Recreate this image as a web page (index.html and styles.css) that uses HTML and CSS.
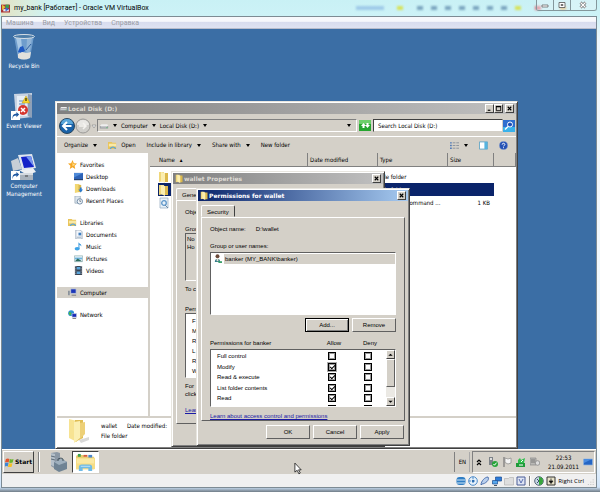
FILE: index.html
```html
<!DOCTYPE html>
<html lang="en">
<head>
  <meta charset="UTF-8">
  <meta name="viewport" content="width=device-width, initial-scale=1.0">
  <title>my_bank [Работает] - Oracle VM VirtualBox</title>
  <link rel="stylesheet" href="styles.css">
</head>
<body>
  <!-- shared icons -->
  <svg class="sprite" aria-hidden="true">
    <symbol id="folder" viewBox="0 0 12 12">
      <path d="M1 1h5v9l-5 1z" fill="#f0d77a"/>
      <path d="M6 2h4v9H5z" fill="#dcb94c"/>
      <path d="M3 1l4 1v10L3 10z" fill="#fbeeb0"/>
    </symbol>
    <symbol id="library" viewBox="0 0 10 10">
      <path d="M0 1h4l1 1h4v7H0z" fill="#e9c45a"/>
      <path d="M1 3h8v3H1z" fill="#f9e9a6"/>
      <path d="M2 9c0-4 7-4 7 0H7.500c0-2-4-2-4 0z" fill="#5aa5da"/>
    </symbol>
    <symbol id="drive" viewBox="0 0 12 10">
      <path d="M1 5l2-2h7l1 2z" fill="#eee"/>
      <path d="M1 5h10v3H1z" fill="#999da3"/>
      <path d="M2 6h8" stroke="#e8e8e8"/>
      <path d="M9 7h1" stroke="#3c4"/>
    </symbol>
    <symbol id="shortcut" viewBox="0 0 10 10">
      <path d="M0 0h10v10H0z" fill="#fff"/>
      <path d="M2 9c0-3 1-4 4-4V7l3-3-3-3v2C3 3 1 5 2 9z" fill="#1c56a0"/>
    </symbol>
    <symbol id="cross" viewBox="0 0 8 8">
      <path d="M2 2l4 4M6 2L2 6" stroke="#000" stroke-width="1.300"/>
    </symbol>
  </svg>

  <div class="machine">
    <header class="machine-title">
      <svg class="ic-8" viewBox="0 0 8 8"><path d="M0 1h8v7H0z" fill="#a33"/><path d="M1 1l3 2-3 3z" fill="#e8c93a"/><path d="M4 1h3v3H4z" fill="#3e9e4c"/><path d="M2 5h5v2H2z" fill="#e9eef8"/><path d="M4 3l3 2-3 2z" fill="#3b6ac9"/></svg>
      <h1>my_bank [Работает] - Oracle VM VirtualBox</h1>
      <div class="glass-blur" aria-hidden="true"><i class="blue"></i><i class="yellow"></i><i></i><i></i><i></i><i></i><i></i><i></i><i></i><i class="yellow"></i><i class="red"></i><i class="orange"></i></div>
      <div class="glass-buttons">
        <button aria-label="Minimize"><svg viewBox="0 0 10 8"><path d="M2 4h6v2H2z" fill="#fff" stroke="#555" stroke-width=".7"/></svg></button>
        <button aria-label="Maximize"><svg viewBox="0 0 10 8"><path d="M2 1.500h6v5H2z" fill="#fff" stroke="#555" stroke-width=".8"/><path d="M4 3.500h2v1H4z" fill="#999" stroke="#555" stroke-width=".7"/></svg></button>
        <button class="wide" aria-label="Close"><svg viewBox="0 0 10 8"><path d="M2.500 1.500l5 5M7.500 1.500l-5 5" stroke="#555" stroke-width="2.600"/><path d="M2.500 1.500l5 5M7.500 1.500l-5 5" stroke="#fff" stroke-width="1.400"/></svg></button>
      </div>
    </header>

    <div class="machine-body">
      <nav class="menu">
        <span>Машина</span><span>Вид</span><span>Устройства</span><span>Справка</span>
      </nav>

      <main class="desktop">
        <div class="shortcuts">
          <div class="shortcut">
            <svg viewBox="0 0 28 28"><path d="M4 3l4 22q6 3 12 0l4-22z" fill="#6f9dcc"/><path d="M6 5l4 19h3L11 5z" fill="#a9c9e6"/><path d="M17 5l-1 19h3l3-19z" fill="#8fb3d6"/><ellipse cx="14" cy="3.500" rx="10.500" ry="2" fill="#4d7da9" stroke="#d5dde5"/><path d="M10 14l3-1 2 5-4 2-3-1z" fill="#1f59c2"/><path d="M16 17l5-6" stroke="#2f5f9f"/><path d="M8 21l4-2 5 1 4-1-1 6q-6 3-12 0z" fill="#e2e0dc"/></svg>
            <span>Recycle Bin</span>
          </div>
          <div class="shortcut">
            <svg viewBox="0 0 28 28"><path d="M4 1l18-1v24l-16 2z" fill="#c8d3e2"/><path d="M7 3h10v20H7z" fill="#e6edf6"/><path d="M18 1l4 1v23l-4-2z" fill="#8ea0b8"/><path d="M9 8h6M9 11h6" stroke="#5d8bc4"/><path d="M16 3l4 7h-8z" fill="#f7d52c" stroke="#b99712" stroke-width=".5"/><path d="M16 5v3" stroke="#000"/><circle cx="13" cy="17" r="5" fill="#d5362f"/><path d="M11 15l4 4M15 15l-4 4" stroke="#fff" stroke-width="1.500"/><use href="#shortcut" x="1" y="18" width="9" height="9"/></svg>
            <span>Event Viewer</span>
          </div>
          <div class="shortcut">
            <svg viewBox="0 0 28 28"><path d="M8 2l14-1 4 14-14 2z" fill="#dfe6ee"/><path d="M11 4l10-1 3 11-10 1z" fill="#1322c8"/><path d="M16 3.500l5-.5 3 11z" fill="#7596ef"/><path d="M1 8l7-3 4 11-9 2z" fill="#c7ced6"/><path d="M9 17l14-2 3 4-9 3z" fill="#edf0f3"/><path d="M10 20h13v7H10z" fill="#a9b3bd"/><path d="M10 20h13v2H10z" fill="#d5dbe1"/><path d="M15 23h3" stroke="#444"/><use href="#shortcut" x="1" y="18" width="9" height="9"/></svg>
            <span>Computer Management</span>
          </div>
        </div>

        <!-- explorer window -->
        <section class="window explorer">
          <div class="titlebar inactive">
            <svg class="ic-9"><use href="#drive"/></svg>
            <h2>Local Disk (D:)</h2>
            <button class="cap" aria-label="Minimize"><svg viewBox="0 0 8 8"><path d="M2 6h3" stroke="#000" stroke-width="1.300"/></svg></button>
            <button class="cap" aria-label="Maximize"><svg viewBox="0 0 8 8"><path d="M1.500 2h5v4.500h-5z" fill="none" stroke="#000"/><path d="M1 1.700h6" stroke="#000" stroke-width="1.300"/></svg></button>
            <button class="cap gap" aria-label="Close"><svg><use href="#cross"/></svg></button>
          </div>

          <div class="navbar">
            <svg class="arrows" viewBox="0 0 38 18"><circle cx="8" cy="9" r="7.500" fill="#1a62a8" stroke="#29475f"/><path d="M2 7a6 5 0 0 1 12 0z" fill="#5aa7db"/><path d="M12.500 9H4.500M8 5L4 9l4 4" stroke="#fff" stroke-width="2" fill="none"/><circle cx="24" cy="9" r="7" fill="#d0cfcb" stroke="#9b9a97"/><path d="M18 8a6 5 0 0 1 12 0z" fill="#e9e8e5"/><path d="M20 9h7M24 6l3 3-3 3" stroke="#f4f3f0" stroke-width="1.500" fill="none"/><path d="M33 8h4l-2 3z" fill="#eee" stroke="#888" stroke-width=".6"/></svg>
            <div class="address">
              <svg class="ic-10"><use href="#drive"/></svg>
              <i class="caret"></i><span>Computer</span>
              <i class="caret"></i><span>Local Disk (D:)</span>
              <i class="caret"></i>
              <i class="caret end"></i>
            </div>
            <button class="refresh" aria-label="Refresh"><svg viewBox="0 0 12 11"><path d="M0 0h12v11H0z" fill="#25a52f"/><path d="M0 0h12v4H0z" fill="#6ccf6a"/><path d="M2 6l2.500-3L7 6H5.500v2h-2V6zM6 5l2.500 3L11 5H9.500V3h-2v2z" fill="#fff"/></svg></button>
            <input class="search" type="text" aria-label="Search Local Disk (D:)" value="Search Local Disk (D:)">
            <button class="find" aria-label="Search"><svg viewBox="0 0 12 12"><path d="M0 0h12v12H0z" fill="#2f6fd0"/><path d="M0 7h12v5H0z" fill="#39b1ea"/><circle cx="7" cy="4.500" r="2.500" fill="#1d4fb8" stroke="#fff"/><path d="M5 6.500L2 9.500" stroke="#fff" stroke-width="1.500"/></svg></button>
          </div>

          <div class="toolbar">
            <button>Organize <i class="caret"></i></button>
            <button><svg class="ic-9"><use href="#library"/></svg> Open</button>
            <button>Include in library <i class="caret"></i></button>
            <button>Share with <i class="caret"></i></button>
            <button>New folder</button>
            <button class="right" aria-label="Change your view"><svg class="ic-9" viewBox="0 0 10 10"><path d="M0 2h2M0 5h2M0 8h2" stroke="#557eb8" stroke-width="1.500"/><path d="M3 2h3M7 2h3M3 5h3M7 5h3M3 8h3M7 8h3" stroke="#88909a"/></svg> <i class="caret"></i></button>
            <button aria-label="Preview pane"><svg class="ic-9" viewBox="0 0 10 10"><path d="M.5 1h9v8h-9z" fill="#fff" stroke="#5ca3c4"/><path d="M6 1h3v8H6z" fill="#55b3df"/></svg></button>
            <button aria-label="Help"><svg class="ic-9" viewBox="0 0 10 10"><circle cx="5" cy="5" r="4.500" fill="#2450b5" stroke="#7d97cf" stroke-width=".6"/><path d="M3.500 4c0-2 3-2 3 0 0 1-1.500 1-1.500 2M5 7v1" stroke="#fff" stroke-width="1.100" fill="none"/></svg></button>
          </div>

          <div class="panes">
            <nav class="tree">
              <ul>
                <li class="root"><svg viewBox="0 0 10 10"><path d="M5 0l1.500 3.500L10 4 7.300 6.300 8 10 5 8 2 10l.7-3.700L0 4l3.500-.5z" fill="#f5a623"/><path d="M5 2l1 2.500 2 .5-2 1.500L5 7z" fill="#ffe28a"/></svg>Favorites</li>
                <li><svg viewBox="0 0 10 10"><path d="M0 1h10v8H0z" fill="#2d62b6"/><path d="M0 1h10L0 6z" fill="#4f8ad8"/><path d="M0 8.500h10" stroke="#253a5c"/></svg>Desktop</li>
                <li><svg viewBox="0 0 10 10"><path d="M1 0h5v9l-5 1z" fill="#f2d772"/><path d="M5 1h3v8H5z" fill="#d9b64b"/><path d="M5 6h1.500V4h2v2H10L7.500 9.500z" fill="#2a7bd0"/></svg>Downloads</li>
                <li><svg viewBox="0 0 10 10"><path d="M1 0h6v8H1z" fill="#dbe4ec" stroke="#8da0b1" stroke-width=".7"/><circle cx="6.500" cy="6" r="3" fill="#eef3f7" stroke="#6f8aa5"/><path d="M6.500 4v2H8" stroke="#456" stroke-width=".7" fill="none"/></svg>Recent Places</li>
              </ul>
              <ul>
                <li class="root"><svg><use href="#library"/></svg>Libraries</li>
                <li><svg viewBox="0 0 10 10"><path d="M2 0h5l2 2v8H2z" fill="#f3f6fa" stroke="#7f93a8" stroke-width=".7"/><path d="M5 3h3v3H5z" fill="#3f7fc0"/><path d="M3 8h5" stroke="#9ab"/></svg>Documents</li>
                <li><svg viewBox="0 0 10 10"><path d="M5 0c0 2 4 2 3 5-.5-1.500-1.500-2-2-2v5H5z" fill="#2b8fd8"/><ellipse cx="3.500" cy="7.500" rx="2.800" ry="2" fill="#3da4e8"/></svg>Music</li>
                <li><svg viewBox="0 0 10 10"><path d="M.5 2h9v6.500h-9z" fill="#e8f2fa" stroke="#8aa" stroke-width=".7"/><path d="M1 4h8v2H1z" fill="#6db4dd"/><path d="M1 8l3-3 5 3z" fill="#2c6d5f"/></svg>Pictures</li>
                <li><svg viewBox="0 0 10 10"><path d="M1 0h8v10H1z" fill="#3a4452"/><path d="M3 1h4v3H3zM3 6h4v3H3z" fill="#5aa6dc"/><path d="M2 0v10M8 0v10" stroke="#cdd4dc" stroke-width=".8" stroke-dasharray="1"/></svg>Videos</li>
              </ul>
              <ul>
                <li class="root current"><svg viewBox="0 0 10 10"><path d="M3 1h6v5H3z" fill="#1c36b8" stroke="#cbd2dc" stroke-width=".8"/><path d="M0 3h2v5H0z" fill="#8a929c"/><path d="M4 8h5" stroke="#777"/></svg>Computer</li>
              </ul>
              <ul>
                <li class="root"><svg viewBox="0 0 10 10"><circle cx="3.500" cy="3.500" r="3.300" fill="#2b8fd8"/><path d="M1 2l3 1-1 3-2-1z" fill="#49b749"/><path d="M4.500 4h5v4h-5z" fill="#1628b8" stroke="#c9d2dd" stroke-width=".7"/><path d="M5 9.500h4" stroke="#777"/></svg>Network</li>
              </ul>
            </nav>

            <table class="files">
              <colgroup><col><col class="date"><col class="type"><col class="size"><col class="rest"></colgroup>
              <thead>
                <tr><th>Name <small>▴</small></th><th>Date modified</th><th>Type</th><th>Size</th><th></th></tr>
              </thead>
              <tbody>
                <tr><td><svg><use href="#folder"/></svg></td><td></td><td>File folder</td><td></td><td></td></tr>
                <tr class="selected"><td><svg><use href="#folder"/></svg></td><td></td><td>File folder</td><td></td><td></td></tr>
                <tr><td><svg viewBox="0 0 12 12"><path d="M2 1h8v10H2z" fill="#e9f1f8" stroke="#8fa6bd" stroke-width=".7"/><circle cx="6" cy="6" r="2.300" fill="none" stroke="#5d96c9" stroke-width="1.300"/><path d="M7 8l3 3" stroke="#6a8aa8"/></svg></td><td></td><td>Windows Command ...</td><td class="num">1 KB</td><td></td></tr>
              </tbody>
            </table>
          </div>

          <footer class="details">
            <svg viewBox="0 0 24 26"><path d="M12 22l10-3v3l-8 3z" fill="#d9d9d9"/><path d="M2 1l8 2v21l-8-4z" fill="#f7e392"/><path d="M8 2h8v18l-8 4z" fill="#dfbd55"/><path d="M7 4l6-1v17l-6 5z" fill="#fbefb2"/><path d="M13 5l5-1v12l-5 5z" fill="#edd078"/></svg>
            <p>wallet <span>Date modified:</span><br>File folder</p>
          </footer>
        </section>

        <!-- properties dialog, mostly behind the next one -->
        <section class="window dialog properties">
          <div class="titlebar inactive">
            <svg class="ic-9"><use href="#folder"/></svg>
            <h2>wallet Properties</h2>
            <button class="cap" aria-label="Close"><svg><use href="#cross"/></svg></button>
          </div>
          <div class="tab">Gene</div>
          <div class="sheet">
            <p>Obje</p>
            <p class="caption">Grou</p>
            <div class="box muted">No<br>Ho</div>
            <p class="hint">To c</p>
            <p class="caption">Perm</p>
            <ul class="box">
              <li>F</li><li>M</li><li>R</li><li>L</li><li>R</li><li>W</li>
            </ul>
            <p class="note">For<br>click</p>
            <a href="#learn">Lear</a>
          </div>
        </section>

        <!-- permissions dialog -->
        <section class="window dialog permissions">
          <div class="titlebar">
            <svg class="ic-9"><use href="#folder"/></svg>
            <h2>Permissions for wallet</h2>
            <button class="cap" aria-label="Close"><svg><use href="#cross"/></svg></button>
          </div>
          <div class="tab">Security</div>
          <div class="sheet">
            <p class="object"><span>Object name:</span><span>D:\wallet</span></p>
            <p class="caption">Group or user names:</p>
            <ul class="box users">
              <li><svg class="ic-9" viewBox="0 0 10 10"><circle cx="5" cy="2.500" r="2.200" fill="#6b4a3a"/><path d="M2 9c0-5 6-5 6 0z" fill="#2f7a86"/><path d="M4 5h2v3H4z" fill="#e8e0d0"/><path d="M6 8h4v2H6z" fill="#3ba06a"/></svg><span>banker (MY_BANK\banker)</span></li>
            </ul>
            <div class="actions">
              <button class="btn default">Add...</button>
              <button class="btn">Remove</button>
            </div>
            <div class="perm-head"><span>Permissions for banker</span><span>Allow</span><span>Deny</span></div>
            <div class="box perm-box">
              <div class="perm-view">
                <table>
                  <tr><td>Full control</td><td><input type="checkbox" aria-label="Allow full control"></td><td><input type="checkbox" aria-label="Deny full control"></td></tr>
                  <tr><td>Modify</td><td><input class="focus" type="checkbox" aria-label="Allow modify" checked></td><td><input type="checkbox" aria-label="Deny modify"></td></tr>
                  <tr><td>Read &amp; execute</td><td><input type="checkbox" aria-label="Allow read and execute" checked></td><td><input type="checkbox" aria-label="Deny read and execute"></td></tr>
                  <tr><td>List folder contents</td><td><input type="checkbox" aria-label="Allow list folder contents" checked></td><td><input type="checkbox" aria-label="Deny list folder contents"></td></tr>
                  <tr><td>Read</td><td><input type="checkbox" aria-label="Allow read" checked></td><td><input type="checkbox" aria-label="Deny read"></td></tr>
                  <tr><td></td><td><input type="checkbox" aria-label="Allow write"></td><td><input type="checkbox" aria-label="Deny write"></td></tr>
                </table>
              </div>
              <div class="scroll">
                <button class="cap" aria-label="Scroll up"><svg viewBox="0 0 8 8"><path d="M1.500 5.500L4 3l2.500 2.500z"/></svg></button>
                <div class="thumb"></div>
                <button class="cap" aria-label="Scroll down"><svg viewBox="0 0 8 8"><path d="M1.500 3L4 5.500 6.500 3z"/></svg></button>
              </div>
            </div>
            <a href="#learn">Learn about access control and permissions</a>
          </div>
          <div class="dialog-buttons">
            <button class="btn">OK</button>
            <button class="btn">Cancel</button>
            <button class="btn">Apply</button>
          </div>
        </section>
      </main>

      <div class="taskbar">
        <button class="start"><svg viewBox="0 0 10 10"><path d="M1 1q2-1 4 0l-1 4q-2-1-4 0z" fill="#e4532b"/><path d="M5.500 1.200q2 1 4 0l-1 3.800q-2 1-4 0z" fill="#6cb52d"/><path d="M0 5.500q2-1 4 0l-1 4q-1-1-3 0z" fill="#3d86d6"/><path d="M4.300 5.700q2 1 4 0l-1 4q-2 1-4 0z" fill="#f6c026"/></svg>Start</button>
        <i class="divider"></i>
        <svg class="server" viewBox="0 0 20 20"><path d="M3 1l6-1 3 1v13l-6 2-3-2z" fill="#8b98a5"/><path d="M3 1l4 1v13l-4-2z" fill="#b5c0ca"/><path d="M3 4l4 1M3 7l4 1" stroke="#5f6d7a"/><path d="M6 10l8-3 5 3v7l-8 3-5-3z" fill="#6f8394"/><path d="M6 10l8-3 5 3-8 3z" fill="#9fb0be"/><path d="M10 9V7l3-1 2 1v2" stroke="#45545f" fill="none"/></svg>
        <button class="task" aria-label="Local Disk (D:)"><svg viewBox="0 0 22 20"><path d="M1 4q0-2 2-2h6l1 2h10v13H1z" fill="#e9c96a"/><path d="M3 1h3v3H3z" fill="#3ba24c"/><path d="M9 2h4v2H9z" fill="#d65a3a"/><path d="M14 2h4v3h-4z" fill="#4a86c9"/><path d="M1 5h20v12H1z" fill="#f6dd85"/><path d="M2 6h18v5H2z" fill="#fae9a3"/><path d="M4 19v-4q0-3 3-3h8q3 0 3 3v4h-4v-3H8v3z" fill="#6fbbe6"/><path d="M6 14h10" stroke="#bfe3f7"/></svg></button>
        <div class="lang">EN</div>
        <div class="tray">
          <svg viewBox="0 0 10 10"><path d="M3 5l2-2 2 2M3 8l2-2 2 2" stroke="#000" stroke-width="1.200" fill="none"/></svg>
          <svg viewBox="0 0 10 10"><path d="M1 0h4v8H1z" fill="#7c8288"/><path d="M2 1h2v2H2z" fill="#ddd"/><circle cx="7" cy="7" r="3" fill="#28a43a"/><path d="M5.500 7l1 1.200 2-2.500" stroke="#fff" fill="none"/></svg>
          <svg viewBox="0 0 10 10"><path d="M2 0v10" stroke="#777" stroke-width="1.200"/><path d="M3 1l3 1 3-1v5L6 7 3 5.500z" fill="#f5f5f5" stroke="#888" stroke-width=".7"/></svg>
          <svg viewBox="0 0 10 10"><path d="M0 6h9v4H0z" fill="#1f9a3a"/><path d="M2 6V3l2-2 1 2 4-2-1 5z" fill="#2fbf4d"/><path d="M3 8h4M5 5l2-2" stroke="#fff"/></svg>
          <svg viewBox="0 0 10 10"><path d="M0 1h6v7H0z" fill="#b9b9b6" stroke="#888" stroke-width=".7"/><path d="M1 3h4M1 5h4" stroke="#777"/><circle cx="7.500" cy="6" r="2.300" fill="#ddd" stroke="#888" stroke-width=".8"/></svg>
          <time>22:53<br>21.09.2011</time>
          <svg viewBox="0 0 10 10"><path d="M.5 2h9v6h-9z" fill="#2465c4" stroke="#8fb3de" stroke-width=".7"/><path d="M1 2h8L1 6z" fill="#4a8ce0"/></svg>
        </div>
        <svg class="pointer" viewBox="0 0 10 14"><path d="M1 1v10l2.500-2 2 4 1.500-1-2-3.500h3z" fill="#fff" stroke="#000" stroke-width=".8"/></svg>
      </div>

      <footer class="status">
        <svg viewBox="0 0 10 10"><rect x=".5" y="1" width="9" height="8" rx="3" fill="#2f7ec4"/><path d="M1 4h8M1 7h8" stroke="#d3e8f7"/></svg>
        <svg viewBox="0 0 10 10"><circle cx="5" cy="5" r="4.300" fill="#e6f1fb" stroke="#4d8bc8"/><path d="M5 1v8M1 5h8" stroke="#4d8bc8" stroke-dasharray="2"/><circle cx="5" cy="5" r="1.200" fill="#2b6cb0"/></svg>
        <svg viewBox="0 0 10 10"><path d="M1 9c0-4 4-8 7-8 2 3-3 7-6 7z" fill="#b9d0ee" stroke="#4167a8" stroke-width=".9"/></svg>
        <svg viewBox="0 0 10 10"><path d="M3.500 1h6v4h-6z" fill="#2c7bd8" stroke="#1d4e94" stroke-width=".7"/><path d="M.5 4.500h5V8h-5z" fill="#56a8ee" stroke="#1d4e94" stroke-width=".7"/><path d="M2 9.500h3" stroke="#456"/></svg>
        <svg viewBox="0 0 10 10"><path d="M.5 2.500h4l1-1h4V9h-9z" fill="#dedede" stroke="#b5b5b5" stroke-width=".7"/></svg>
        <svg viewBox="0 0 10 10"><path d="M1 1h8v8H1z" fill="#dde4f3" stroke="#4a5c96"/><path d="M3 3l2 4 2-4" stroke="#5a6eb0" fill="none"/></svg>
        <i class="divider"></i>
        <svg viewBox="0 0 10 10"><circle cx="5" cy="5" r="4.300" fill="#c9d6e8" stroke="#567"/><path d="M5 9V1a4 4 0 0 1 0 8z" fill="#37a53c"/><path d="M3 3l2 2-2 2" stroke="#356" fill="none"/></svg>
        <svg viewBox="0 0 10 10"><path d="M1 1h8v8H1z" fill="#e7e2c8" stroke="#333"/><path d="M5 2.500v3M3 5h4L5 7.500z" stroke="#222" stroke-width=".8"/></svg>
        <span>Right Ctrl</span>
        <svg class="grip" viewBox="0 0 10 10"><path d="M9 3v1M9 6v1M9 9v1M6 6v1M6 9v1M3 9v1" stroke="#bbb" stroke-width="1.500"/></svg>
      </footer>
    </div>
  </div>
</body>
</html>
```

FILE: styles.css
```css
* {
  box-sizing: border-box;
}
body {
  margin: 0;
  font-family: "DejaVu Sans Condensed", "DejaVu Sans", "Liberation Sans", sans-serif;
  font-size: 6px;
  line-height: 8px;
  color: #000;
  overflow: hidden;
}
h1, h2, p, ul {
  margin: 0;
  padding: 0;
  font-size: 6px;
  list-style: none;
}
button, input {
  font: inherit;
  color: inherit;
  margin: 0;
  padding: 0;
  border: none;
  background: none;
}
svg {
  display: block;
  flex: none;
}
.sprite {
  position: absolute;
  width: 0;
  height: 0;
}
.ic-8 { width: 9px; height: 10px; }
.ic-9 { width: 9px; height: 9px; }
.ic-10 { width: 10px; height: 10px; }

/* host window */
.machine {
  display: flex;
  flex-direction: column;
  height: 100vh;
  padding: 0 3px 4px 1px;
  background: linear-gradient(180deg, #c9f1f5 0, #cdf2f7 16px, #eef6fc 40px, #f4fafe 92%, #cfe4fa 99%, #6f7c86 100%);
}
.machine-title {
  position: relative;
  display: flex;
  align-items: center;
  gap: 4px;
  height: 16px;
  flex: none;
  background: linear-gradient(90deg, #e3e3c4, #d8eee2 30px, transparent 50px);
}
.machine-title h1 {
  font-family: Roboto, "Open Sans", sans-serif;
  font-size: 7px;
  font-weight: normal;
  white-space: nowrap;
}
/* toolbar of the window behind, seen through the glass */
.glass-blur {
  display: flex;
  gap: 8px;
  flex: 1;
  justify-content: flex-end;
  padding-right: 8px;
  filter: blur(1px);
}
.glass-blur i {
  width: 6px;
  height: 4px;
  background: #7ba6bf;
}
.glass-blur i.blue {
  width: 28px;
  margin-right: 5px;
  background: #9fcbe8;
}
.glass-blur i.yellow {
  margin-right: 6px;
  background: #d7e35c;
}
.glass-blur i.red {
  margin-right: 11px;
  background: #e0707c;
}
.glass-blur i.orange { background: #dcb46a; }
.glass-buttons {
  display: flex;
  align-self: flex-start;
  margin-left: -42px;
  z-index: 1;
  border: 1px solid #84979c;
  border-top: none;
  border-radius: 0 0 3px 3px;
}
.glass-buttons button {
  width: 17px;
  height: 10px;
  padding: 1px 3px;
  border-right: 1px solid #84979c;
  background: rgba(235, 248, 250, 0.4);
}
.glass-buttons .wide {
  width: 25px;
  padding: 1px 7px;
  border: none;
}
.glass-buttons svg {
  width: 10px;
  height: 8px;
}
.machine-body {
  flex: 1;
  min-height: 0;
  display: flex;
  flex-direction: column;
  border: 1px solid #7d8b94;
}
.menu {
  flex: none;
  display: flex;
  gap: 9px;
  height: 12px;
  padding: 0 4px;
  line-height: 12px;
  font-family: Roboto, "Open Sans", sans-serif;
  font-size: 7px;
  color: #9a9ca4;
  background: linear-gradient(#f7f8fc 40%, #d8dcee 45%, #dfe3f2);
  border-bottom: 1px solid #b8bccb;
}

/* guest desktop */
.desktop {
  flex: 1;
  min-height: 0;
  position: relative;
  overflow: hidden;
  background: #3b6ea5;
}
.shortcuts {
  display: flex;
  flex-direction: column;
  width: 44px;
  padding-top: 4px;
  color: #fff;
}
.shortcut {
  display: flex;
  flex-direction: column;
  align-items: center;
  gap: 1px;
  height: 60px;
  text-align: center;
}
.shortcut svg {
  width: 28px;
  height: 28px;
}

/* classic windows */
.window {
  position: absolute;
  display: flex;
  flex-direction: column;
  padding: 1px;
  background: #d4d0c8;
  border: 1px solid;
  border-color: #e8e6e0 #404040 #404040 #e8e6e0;
  box-shadow: inset 1px 1px #fff, inset -1px -1px #808080;
}
.titlebar {
  flex: none;
  display: flex;
  align-items: center;
  height: 11px;
  padding: 0 2px;
  color: #fff;
  background: linear-gradient(90deg, #0a246a, #a6caf0);
}
.titlebar.inactive {
  color: #dedbd4;
  background: linear-gradient(90deg, #808080, #c0c0c0);
}
.titlebar h2 {
  flex: 1;
  font-family: "DejaVu Sans", sans-serif;
  white-space: nowrap;
}
.cap {
  width: 9px;
  height: 9px;
  background: #d4d0c8;
  border: 1px solid;
  border-color: #fff #404040 #404040 #fff;
}
.cap.gap {
  margin-left: 2px;
}
.cap svg {
  width: 7px;
  height: 7px;
}
.caret {
  display: inline-block;
  width: 0;
  border: 2px solid transparent;
  border-top: 3px solid #000;
  border-bottom: none;
}

/* explorer */
.explorer {
  left: 53px;
  top: 72px;
  width: 463px;
  height: 348px;
}
.navbar {
  flex: none;
  display: flex;
  align-items: center;
  height: 23px;
  padding: 2px 1px 1px 2px;
  border-bottom: 1px solid #fff;
}
.arrows {
  width: 38px;
  height: 18px;
}
.address {
  flex: 1;
  display: flex;
  align-items: center;
  gap: 4px;
  height: 13px;
  padding: 0 5px 0 1px;
  border: 1px solid;
  border-color: #808080 #fff #fff #808080;
}
.address .end {
  margin-left: auto;
}
.refresh {
  margin: 0 2px;
}
.refresh svg {
  width: 12px;
  height: 11px;
}
.search {
  width: 130px;
  height: 13px;
  padding: 0 4px;
  background: #fff;
  border: 1px solid;
  border-color: #404040 #d4d0c8 #d4d0c8 #404040;
}
.find svg {
  width: 12px;
  height: 12px;
}
.toolbar {
  flex: none;
  display: flex;
  align-items: center;
  gap: 11px;
  height: 16px;
  padding: 0 8px 0 7px;
}
.toolbar button {
  display: flex;
  align-items: center;
  gap: 4px;
}
.toolbar .caret {
  margin-left: 1px;
}
.toolbar .right {
  margin-left: auto;
}
.panes {
  flex: 1;
  min-height: 0;
  display: flex;
  background: #fff;
}
.tree {
  display: flex;
  flex-direction: column;
  gap: 11px;
  width: 93px;
  padding-top: 6px;
  border-right: 2px solid #d4d0c8;
}
.tree ul {
  display: flex;
  flex-direction: column;
  gap: 1px;
}
.tree li {
  display: flex;
  align-items: center;
  gap: 3px;
  height: 11px;
  padding-left: 17px;
}
.tree li.root {
  padding-left: 11px;
}
.tree li.current {
  background: #d4d0c8;
}
.tree svg {
  width: 9px;
  height: 9px;
}
.files {
  flex: 1;
  align-self: flex-start;
  table-layout: fixed;
  border-collapse: separate;
  border-spacing: 0;
}
.files .date { width: 70px; }
.files .type { width: 70px; }
.files .size { width: 46px; }
.files .rest { width: 22px; }
.files th {
  height: 14px;
  padding: 0 2px;
  text-align: left;
  font-weight: normal;
  background: #d4d0c8;
  border-right: 1px solid #808080;
  border-bottom: 1px solid #808080;
}
.files th:first-child {
  padding-left: 9px;
}
.files small {
  margin-left: 3px;
  font-size: 6px;
}
.files td {
  height: 13px;
  padding: 0 4px 0 2px;
  white-space: nowrap;
}
.files td:first-child {
  padding-left: 8px;
}
.files tbody::before {
  content: "";
  display: block;
  height: 3px;
}
.files td svg {
  width: 12px;
  height: 12px;
}
.files .num {
  text-align: right;
}
.files .selected td:not(:last-child) {
  color: #fff;
  background: linear-gradient(#0a246a, #0a246a) 8px 0 no-repeat;
}
.files .selected td:not(:first-child):not(:last-child) {
  background-position: 0 0;
}
.details {
  flex: none;
  display: flex;
  align-items: center;
  gap: 10px;
  height: 31px;
  padding: 0 0 3px 10px;
  background: #fff;
  border-top: 2px solid #d4d0c8;
}
.details svg {
  width: 24px;
  height: 26px;
}
.details p {
  line-height: 10px;
}
.details span {
  margin-left: 8px;
}

/* dialogs */
.dialog {
  font-family: "Liberation Sans", Arial, sans-serif;
}
.properties {
  left: 169px;
  top: 142px;
  width: 214px;
  height: 276px;
}
.permissions {
  left: 194px;
  top: 159px;
  width: 214px;
  height: 258px;
}
.tab {
  align-self: flex-start;
  flex: none;
  height: 12px;
  margin: 4px 0 0 3px;
  padding: 0 5px;
  line-height: 12px;
  border: 1px solid;
  border-color: #fff #404040 transparent #fff;
  border-radius: 2px 2px 0 0;
}
.sheet {
  flex: 1;
  min-height: 0;
  margin: 0 3px;
  padding: 7px 8px 0;
  border: 1px solid;
  border-color: #fff #606060 #606060 #fff;
}
.sheet a {
  display: block;
  color: #1a1aa6;
}
.box {
  background: #fff;
  border: 1px solid;
  border-color: #606060 #fff #fff #606060;
}
.properties .sheet {
  margin-bottom: 21px;
}
.properties .caption {
  margin-top: 9px;
}
.properties .muted {
  height: 48px;
  padding: 1px;
  background: none;
}
.properties .sheet .hint {
  margin: 4px 0 12px;
}
.properties ul {
  height: 65px;
  padding: 2px 6px;
}
.properties li {
  line-height: 10px;
}
.properties .note {
  margin: 4px 0 8px;
}
.object {
  display: flex;
  gap: 10px;
}
.permissions .caption {
  margin: 9px 0 2px;
}
.users {
  height: 63px;
}
.users li {
  display: flex;
  align-items: center;
  gap: 2px;
  height: 11px;
  padding-left: 2px;
}
.users span {
  flex: 1;
  padding: 1px;
  background: #d4d0c8;
}
.actions {
  display: flex;
  justify-content: flex-end;
  gap: 3px;
  margin: 3px 0 7px;
}
.btn {
  width: 44px;
  height: 14px;
  border: 1px solid;
  border-color: #fff #606060 #606060 #fff;
  text-align: center;
}
.btn.default {
  border-color: #000;
  box-shadow: inset 1px 1px #fff, inset -1px -1px #808080;
}
.perm-head {
  display: grid;
  grid-template-columns: 1fr 36px 36px 8px;
  padding-bottom: 2px;
}
.perm-head span:not(:first-child) {
  text-align: center;
}
.perm-box {
  display: flex;
  height: 58px;
}
.perm-view {
  flex: 1;
  overflow: hidden;
}
.perm-view table {
  width: 100%;
  height: 64px;
  padding-top: 1px;
  border-spacing: 0;
}
.perm-view td {
  width: 36px;
  padding: 0;
  text-align: center;
  line-height: 8px;
}
.perm-view td:first-child {
  width: auto;
  padding-left: 6px;
  text-align: left;
}
.perm-view input {
  appearance: none;
  display: block;
  width: 8px;
  height: 8px;
  margin: 0 auto;
  border: 1px solid #000;
  background: #fff;
  box-shadow: inset 0 0 0 1px #999;
}
.perm-view input:checked::after {
  content: "";
  display: block;
  width: 4px;
  height: 2px;
  margin: 1px;
  border: solid #000;
  border-width: 0 0 1px 1px;
  transform: rotate(-45deg);
}
.perm-view input.focus {
  outline: 1px solid #aaa;
}
.scroll {
  display: flex;
  flex-direction: column;
  width: 9px;
  background: #ebe9e4;
}
.scroll .thumb {
  height: 28px;
  margin-bottom: auto;
  background: #d4d0c8;
  border: 1px solid;
  border-color: #fff #606060 #606060 #fff;
}
.perm-box + a {
  margin-top: 5px;
}
.dialog-buttons {
  flex: none;
  display: flex;
  justify-content: flex-end;
  gap: 3px;
  padding: 4px 4px 5px;
}

/* taskbar */
.taskbar {
  position: relative;
  flex: none;
  display: flex;
  align-items: center;
  height: 25px;
  padding: 1px;
  background: #d4d0c8;
  border-top: 1px solid #fff;
}
.start {
  display: flex;
  align-items: center;
  gap: 1px;
  width: 31px;
  height: 22px;
  padding-left: 1px;
  font-family: "DejaVu Sans", sans-serif;
  font-weight: bold;
  border: 1px solid;
  border-color: #fff #404040 #404040 #fff;
}
.start svg {
  width: 9px;
  height: 9px;
}
.divider {
  width: 2px;
  height: 20px;
  margin: 0 4px;
  border-left: 1px solid #808080;
  border-right: 1px solid #fff;
}
.server {
  width: 20px;
  height: 20px;
  margin: 0 4px;
}
.task {
  width: 27px;
  height: 22px;
  padding: 0 2px;
  background: #fff;
  border: 1px solid;
  border-color: #404040 #fff #fff #404040;
}
.task svg {
  width: 21px;
  height: 19px;
}
.lang {
  margin-left: auto;
  padding: 6px 3px 6px 4px;
  border-left: 1px solid #808080;
  border-right: 1px solid #aaa;
}
.tray {
  display: flex;
  align-items: center;
  gap: 4px;
  height: 22px;
  margin-left: 2px;
  padding: 0 1px;
  border: 1px solid;
  border-color: #808080 #fff #fff #808080;
}
.tray svg {
  width: 10px;
  height: 10px;
}
.tray time {
  margin-left: 4px;
  text-align: center;
  line-height: 9px;
}
.pointer {
  position: absolute;
  left: 292px;
  top: 12px;
  width: 9px;
  height: 13px;
}
.status {
  flex: none;
  display: flex;
  align-items: center;
  justify-content: flex-end;
  gap: 2px;
  height: 13px;
  padding-right: 2px;
  font-family: "Open Sans", "Noto Sans", sans-serif;
  background: #f0f0f0;
}
.status svg {
  width: 10px;
  height: 10px;
}
.status .divider {
  height: 10px;
  margin: 0 1px;
}
.status .grip {
  width: 8px;
}
```
